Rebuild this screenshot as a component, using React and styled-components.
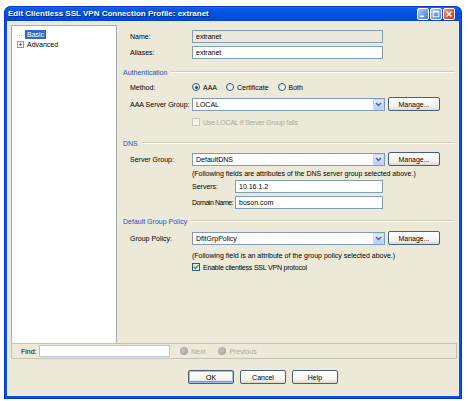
import React from 'react';
import styled, { createGlobalStyle } from 'styled-components';

const Global = createGlobalStyle`
  html, body { margin: 0; padding: 0; background: #ffffff; }
  body { font-family: "Liberation Sans", Arial, sans-serif; font-size: 7px; color: #000; }
  * { box-sizing: border-box; }
`;

const Window = styled.div`
  margin: 6px 0 0 4px;
  width: 458px;
  height: 393px;
  border-radius: 7px 7px 0 0;
  background: linear-gradient(
    to bottom,
    #3d8cf6 0px,
    #0a5ee9 2px,
    #0054e3 6px,
    #0050dc 11px,
    #0046cf 15px,
    #0055e5 15px,
    #0055e5 100%
  );
  box-shadow: inset 0 0 0 1px #0a32c8;
  padding: 0 3px 3px 3px;
  display: flex;
  flex-direction: column;
`;

const TitleBar = styled.div`
  height: 15px;
  display: flex;
  align-items: center;
  justify-content: space-between;
  padding: 0 4px 0 1px;
`;

const TitleText = styled.div`
  color: #ffffff;
  font-weight: bold;
  font-size: 8px;
  text-shadow: 1px 1px 0 #0a1e80;
  white-space: nowrap;
`;

const CaptionGroup = styled.div`
  display: flex;
  gap: 1px;
`;

const CaptionBtn = styled.div`
  width: 12px;
  height: 12px;
  border: 1px solid #ffffff;
  border-radius: 2px;
  background: ${p =>
    p.$close
      ? 'linear-gradient(135deg, #f4a285 0%, #e3532b 55%, #c8421a 100%)'
      : 'linear-gradient(135deg, #b7cff8 0%, #6d9aee 55%, #4f80e4 100%)'};
  display: flex;
  align-items: center;
  justify-content: center;
`;

const Content = styled.div`
  flex: 1;
  background: #ece9d8;
  display: flex;
  flex-direction: column;
`;

const Main = styled.div`
  height: 322px;
  display: flex;
  padding: 4px 2px 0 4px;
`;

const Tree = styled.div`
  width: 106px;
  background: #ffffff;
  border: 1px solid #a5acb5;
  border-bottom: none;
  padding-top: 3px;
`;

const TreeItem = styled.div`
  height: 10px;
  display: flex;
  align-items: center;
  padding-left: 5px;
  gap: 3px;
`;

const Expander = styled.div`
  width: 7px;
  height: 7px;
  border: 1px solid #919b9c;
  background: #ffffff;
  display: flex;
  align-items: center;
  justify-content: center;
  font-size: 7px;
  line-height: 5px;
  color: #000;
`;

const Leaf = styled.div`
  width: 7px;
  height: 7px;
  border-bottom: 1px dotted #c8c8c8;
  margin-top: -3px;
`;

const TreeLabel = styled.span`
  padding: 1px 2px;
  margin-left: -2px;
  background: ${p => (p.$selected ? '#316ac5' : 'transparent')};
  color: ${p => (p.$selected ? '#ffffff' : '#000')};
`;

const Form = styled.div`
  flex: 1;
  display: flex;
  flex-direction: column;
`;

const Row = styled.div`
  height: ${p => p.$h}px;
  margin-top: ${p => p.$mt}px;
  padding-left: ${p => p.$indent ?? 13}px;
  display: flex;
  align-items: center;
  white-space: nowrap;
`;

const Label = styled.div`
  width: ${p => p.$w}px;
  flex: none;
  white-space: nowrap;
  letter-spacing: ${p => (p.$tight ? '-0.45px' : 'normal')};
  color: ${p => (p.$disabled ? '#aca899' : '#000')};
`;

const TextInput = styled.div`
  width: ${p => p.$w}px;
  height: 13px;
  border: 1px solid #7f9db9;
  background: ${p => (p.$disabled ? '#ece9d8' : '#ffffff')};
  display: flex;
  align-items: center;
  padding-left: 3px;
`;

const Combo = styled.div`
  width: 193px;
  height: 13px;
  border: 1px solid #7f9db9;
  background: #ffffff;
  display: flex;
  align-items: center;
  justify-content: space-between;
  padding-left: 3px;
`;

const ComboArrow = styled.div`
  width: 11px;
  height: 11px;
  border: 1px solid #c3d3fd;
  border-radius: 1px;
  background: linear-gradient(#e3ecfe, #b8cdf9);
  display: flex;
  align-items: center;
  justify-content: center;
`;

const Button = styled.div`
  width: ${p => p.$w}px;
  height: 14px;
  margin-left: ${p => p.$ml ?? 0}px;
  border: 1px solid #4a5e78;
  border-radius: 2px;
  background: linear-gradient(#ffffff, #f4f3ee 70%, #dcd8cc);
  box-shadow: ${p => (p.$default ? 'inset 0 0 0 1px #9fbdf3, inset 0 -1px 0 1px #6e95e3' : 'none')};
  display: flex;
  align-items: center;
  justify-content: center;
  flex: none;
`;

const SectionHeader = styled.div`
  height: ${p => p.$h}px;
  margin-top: ${p => p.$mt}px;
  padding-left: 6px;
  padding-right: 2px;
  display: flex;
  align-items: center;
  color: #1f4fc0;
  white-space: nowrap;
`;

const SectionLine = styled.div`
  flex: 1;
  margin-left: 4px;
  height: 2px;
  border-top: 1px solid #d0ccba;
  border-bottom: 1px solid #ffffff;
`;

const RadioGroup = styled.div`
  display: flex;
  align-items: center;
  gap: 9px;
`;

const Option = styled.div`
  display: flex;
  align-items: center;
  gap: 3px;
  letter-spacing: ${p => (p.$tight ? '-0.2px' : 'normal')};
  color: ${p => (p.$disabled ? '#aca899' : '#000')};
`;

const RadioCircle = styled.div`
  width: 8px;
  height: 8px;
  border-radius: 50%;
  border: 1px solid #2f5a86;
  background: linear-gradient(135deg, #dcdcd4, #ffffff);
  display: flex;
  align-items: center;
  justify-content: center;
  &::after {
    content: '';
    display: ${p => (p.$checked ? 'block' : 'none')};
    width: 3px;
    height: 3px;
    border-radius: 50%;
    background: #2b4a2b;
  }
`;

const CheckBox = styled.div`
  width: 8px;
  height: 8px;
  border: 1px solid ${p => (p.$disabled ? '#cac8bb' : '#2f5a86')};
  background: ${p => (p.$disabled ? '#f4f3ee' : 'linear-gradient(135deg, #dcdcd4, #ffffff)')};
  display: flex;
  align-items: center;
  justify-content: center;
`;

const Note = styled.div`
  color: #000;
`;

const FindBar = styled.div`
  height: 16px;
  margin: 0 2px 0 4px;
  border: 1px solid #c5c2b2;
  display: flex;
  align-items: center;
  padding-left: 9px;
`;

const FindInput = styled.div`
  width: 131px;
  height: 12px;
  border: 1px solid #b5c3d0;
  background: #ffffff;
`;

const NavItem = styled.div`
  display: flex;
  align-items: center;
  gap: 3px;
  margin-left: ${p => p.$ml}px;
  color: #aca899;
`;

const NavDot = styled.div`
  width: 8px;
  height: 8px;
  border-radius: 50%;
  background: radial-gradient(circle at 40% 40%, #c4c4c0, #9a9a96);
`;

const ButtonRow = styled.div`
  flex: 1;
  display: flex;
  align-items: flex-start;
  padding: 11px 0 0 181px;
  gap: 6px;
`;

const Chevron = () => (
  <svg width="7" height="5" viewBox="0 0 7 5">
    <path d="M1 1 L3.5 3.5 L6 1" fill="none" stroke="#4d6185" strokeWidth="1.4" />
  </svg>
);

const Check = () => (
  <svg width="6" height="6" viewBox="0 0 6 6">
    <path d="M0.6 2.8 L2.3 4.5 L5.4 1.2" fill="none" stroke="#21a121" strokeWidth="1.3" />
  </svg>
);

const Dropdown = ({ value }) => (
  <Combo>
    <span>{value}</span>
    <ComboArrow>
      <Chevron />
    </ComboArrow>
  </Combo>
);

export default function App() {
  return (
    <>
      <Global />
      <Window>
        <TitleBar>
          <TitleText>Edit Clientless SSL VPN Connection Profile: extranet</TitleText>
          <CaptionGroup>
            <CaptionBtn>
              <svg width="10" height="10" viewBox="0 0 10 10">
                <rect x="2" y="6.5" width="4" height="1.6" fill="#ffffff" />
              </svg>
            </CaptionBtn>
            <CaptionBtn>
              <svg width="10" height="10" viewBox="0 0 10 10">
                <rect x="2.2" y="2.2" width="5.6" height="5.6" fill="none" stroke="#ffffff" strokeWidth="0.9" />
                <rect x="2.2" y="2" width="5.6" height="1.4" fill="#ffffff" />
              </svg>
            </CaptionBtn>
            <CaptionBtn $close>
              <svg width="10" height="10" viewBox="0 0 10 10">
                <path d="M2.5 2.5 L7.5 7.5 M7.5 2.5 L2.5 7.5" stroke="#ffffff" strokeWidth="1.5" />
              </svg>
            </CaptionBtn>
          </CaptionGroup>
        </TitleBar>
        <Content>
          <Main>
            <Tree>
              <TreeItem>
                <Leaf />
                <TreeLabel $selected>Basic</TreeLabel>
              </TreeItem>
              <TreeItem>
                <Expander>+</Expander>
                <TreeLabel>Advanced</TreeLabel>
              </TreeItem>
            </Tree>
            <Form>
              <Row $h={13} $mt={5}>
                <Label $w={62}>Name:</Label>
                <TextInput $w={191} $disabled>extranet</TextInput>
              </Row>
              <Row $h={13} $mt={3}>
                <Label $w={62}>Aliases:</Label>
                <TextInput $w={191}>extranet</TextInput>
              </Row>

              <SectionHeader $h={12} $mt={7}>
                Authentication
                <SectionLine />
              </SectionHeader>
              <Row $h={12} $mt={3}>
                <Label $w={62}>Method:</Label>
                <RadioGroup>
                  <Option>
                    <RadioCircle $checked />
                    AAA
                  </Option>
                  <Option>
                    <RadioCircle />
                    Certificate
                  </Option>
                  <Option>
                    <RadioCircle />
                    Both
                  </Option>
                </RadioGroup>
              </Row>
              <Row $h={14} $mt={4}>
                <Label $w={62}>AAA Server Group:</Label>
                <Dropdown value="LOCAL" />
                <Button $w={52} $ml={3}>Manage...</Button>
              </Row>
              <Row $h={12} $mt={5} $indent={75}>
                <Option $disabled $tight>
                  <CheckBox $disabled />
                  Use LOCAL if Server Group fails
                </Option>
              </Row>

              <SectionHeader $h={12} $mt={9}>
                DNS
                <SectionLine />
              </SectionHeader>
              <Row $h={14} $mt={3}>
                <Label $w={62}>Server Group:</Label>
                <Dropdown value="DefaultDNS" />
                <Button $w={52} $ml={3}>Manage...</Button>
              </Row>
              <Row $h={12} $mt={1} $indent={75}>
                <Note>(Following fields are attributes of the DNS server group selected above.)</Note>
              </Row>
              <Row $h={13} $mt={1} $indent={75}>
                <Label $w={43}>Servers:</Label>
                <TextInput $w={148}>10.16.1.2</TextInput>
              </Row>
              <Row $h={13} $mt={3} $indent={75}>
                <Label $w={43} $tight>Domain Name:</Label>
                <TextInput $w={148}>boson.com</TextInput>
              </Row>

              <SectionHeader $h={12} $mt={6}>
                Default Group Policy
                <SectionLine />
              </SectionHeader>
              <Row $h={14} $mt={4}>
                <Label $w={62}>Group Policy:</Label>
                <Dropdown value="DfltGrpPolicy" />
                <Button $w={52} $ml={3}>Manage...</Button>
              </Row>
              <Row $h={11} $mt={5} $indent={75}>
                <Note>(Following field is an attribute of the group policy selected above.)</Note>
              </Row>
              <Row $h={12} $mt={0} $indent={75}>
                <Option $tight>
                  <CheckBox>
                    <Check />
                  </CheckBox>
                  Enable clientless SSL VPN protocol
                </Option>
              </Row>
            </Form>
          </Main>
          <FindBar>
            <Label $w={18}>Find:</Label>
            <FindInput />
            <NavItem $ml={10}>
              <NavDot />
              Next
            </NavItem>
            <NavItem $ml={13}>
              <NavDot />
              Previous
            </NavItem>
          </FindBar>
          <ButtonRow>
            <Button $w={46} $default>OK</Button>
            <Button $w={46}>Cancel</Button>
            <Button $w={46}>Help</Button>
          </ButtonRow>
        </Content>
      </Window>
    </>
  );
}
